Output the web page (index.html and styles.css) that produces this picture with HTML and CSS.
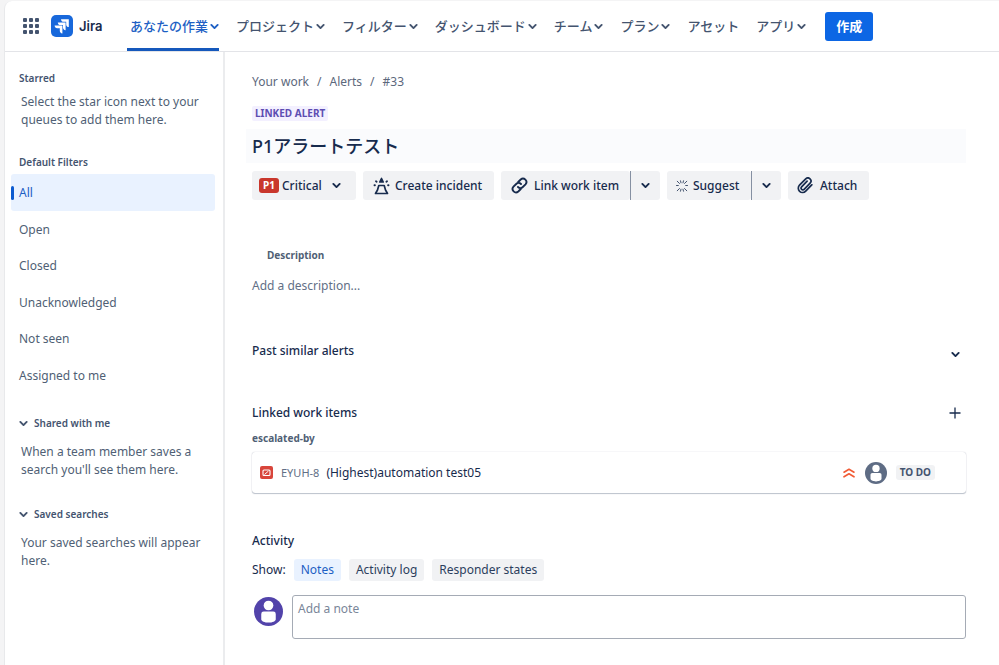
FILE: index.html
```html
<!DOCTYPE html>
<html lang="ja">
<head>
<meta charset="utf-8">
<meta name="viewport" content="width=device-width, initial-scale=1">
<title>Jira</title>
<link rel="stylesheet" href="styles.css">
</head>
<body>
<svg class="defs" width="0" height="0" aria-hidden="true">
  <symbol id="chevron" viewBox="0 0 8 8"><path d="M1.200 2.600 4 5.400l2.800-2.800" fill="none" stroke="currentColor" stroke-width="1.700" stroke-linecap="round" stroke-linejoin="round"/></symbol>
  <symbol id="person" viewBox="0 0 30 30"><circle cx="15" cy="15" r="15" fill="currentColor"/><circle cx="15" cy="8.800" r="5" fill="#fff"/><path d="M7.500 17.500a2.500 2.500 0 0 1 2.500-2.500h10a2.500 2.500 0 0 1 2.500 2.500v5.500c0 2-3.500 3.500-7.500 3.500s-7.500-1.500-7.500-3.500z" fill="#fff"/></symbol>
</svg>
<div class="app">
  <header class="topbar">
    <button class="switcher" type="button" aria-label="アプリの切り替え">
      <svg width="16" height="16" viewBox="0 0 16 16" fill="#44546f"><rect x="0" y="0" width="4" height="4" rx="1"/><rect x="6" y="0" width="4" height="4" rx="1"/><rect x="12" y="0" width="4" height="4" rx="1"/><rect x="0" y="6" width="4" height="4" rx="1"/><rect x="6" y="6" width="4" height="4" rx="1"/><rect x="12" y="6" width="4" height="4" rx="1"/><rect x="0" y="12" width="4" height="4" rx="1"/><rect x="6" y="12" width="4" height="4" rx="1"/><rect x="12" y="12" width="4" height="4" rx="1"/></svg>
    </button>
    <a class="brand" href="#">
      <svg width="22" height="22" viewBox="0 0 22 22"><rect width="22" height="22" rx="5" fill="#1868db"/><g fill="#fff"><path d="M10 4.200H17.800V12c-1.700 0-2.600-1.200-2.600-2.600V6.800H12.600c-1.400 0-2.600-.9-2.600-2.600z"/><path d="M6.800 7.400H14.600V15.200c-1.700 0-2.600-1.200-2.600-2.600V10H9.400c-1.400 0-2.600-.9-2.600-2.600z"/><path d="M3.600 10.600H11.400V18.400c-1.700 0-2.600-1.200-2.600-2.600V13.200H6.200c-1.400 0-2.600-.9-2.600-2.600z"/></g></svg>
      <span>Jira</span>
    </a>
    <nav class="nav">
      <a class="active" href="#">あなたの作業<svg class="chev"><use href="#chevron"/></svg></a>
      <a href="#">プロジェクト<svg class="chev"><use href="#chevron"/></svg></a>
      <a href="#">フィルター<svg class="chev"><use href="#chevron"/></svg></a>
      <a href="#">ダッシュボード<svg class="chev"><use href="#chevron"/></svg></a>
      <a href="#">チーム<svg class="chev"><use href="#chevron"/></svg></a>
      <a href="#">プラン<svg class="chev"><use href="#chevron"/></svg></a>
      <a href="#">アセット</a>
      <a href="#">アプリ<svg class="chev"><use href="#chevron"/></svg></a>
    </nav>
    <button class="create" type="button">作成</button>
  </header>
  <div class="body">
    <aside class="sidebar">
      <section>
        <h2>Starred</h2>
        <p>Select the star icon next to your queues to add them here.</p>
      </section>
      <section>
        <h2>Default Filters</h2>
        <ul class="filters">
          <li><a class="current" href="#">All</a></li>
          <li><a href="#">Open</a></li>
          <li><a href="#">Closed</a></li>
          <li><a href="#">Unacknowledged</a></li>
          <li><a href="#">Not seen</a></li>
          <li><a href="#">Assigned to me</a></li>
        </ul>
      </section>
      <section class="group">
        <h2><button type="button"><svg class="chev"><use href="#chevron"/></svg>Shared with me</button></h2>
        <p>When a team member saves a search you'll see them here.</p>
      </section>
      <section class="group">
        <h2><button type="button"><svg class="chev"><use href="#chevron"/></svg>Saved searches</button></h2>
        <p>Your saved searches will appear here.</p>
      </section>
    </aside>
    <main class="main">
      <nav class="crumbs"><a href="#">Your work</a><span>/</span><a href="#">Alerts</a><span>/</span><a href="#">#33</a></nav>
      <div><span class="tag">LINKED ALERT</span></div>
      <h1>P1アラートテスト</h1>
      <div class="actions">
        <button class="btn priority" type="button"><span class="p1">P1</span>Critical<svg class="chev"><use href="#chevron"/></svg></button>
        <button class="btn incident" type="button">
          <svg width="17" height="18" viewBox="0 0 17 18" fill="none" stroke="#172b4d" stroke-width="1.700" stroke-linejoin="round" stroke-linecap="round"><path d="M5.800 8.500h5.400l1.300 4.500 2 3.500H2.500l2-3.500z"/><path d="M8.500 1.500 6.800 5h3.400z" fill="#172b4d"/><path d="M3 4.300l.6.400M14 4.300l-.6.400M1.500 8.300h.4M15.100 8.300h.4" stroke-width="1.900"/></svg>Create incident</button>
        <div class="split">
          <button class="btn link" type="button"><svg width="17" height="17" viewBox="0 0 17 17" fill="none" stroke="#172b4d" stroke-width="1.900" stroke-linecap="round"><path d="M7.200 5 9.700 2.500a3.400 3.400 0 0 1 4.800 4.800L11.800 10a3.400 3.400 0 0 1-4.800 0"/><path d="M9.800 12 7.300 14.500a3.400 3.400 0 0 1-4.800-4.800L5.200 7A3.400 3.400 0 0 1 10 7"/></svg>Link work item</button>
          <button class="btn more" type="button" aria-label="More link options"><svg class="chev"><use href="#chevron"/></svg></button>
        </div>
        <div class="split">
          <button class="btn suggest" type="button"><svg width="12" height="12" viewBox="0 0 12 12" fill="none" stroke="#44546f" stroke-width="1" stroke-linecap="round"><path d="M4.500.8 5 2.800M7.500.8 7 2.800M1.200 1.200l2.300 2.300M10.800 1.200 8.500 3.500M.5 5.500h1.800M11.500 5.500H9.700M1.200 10.800l2.300-2.300M10.800 10.800 8.500 8.500M4.500 11.200 5 9.200M7.500 11.200 7 9.200"/></svg>Suggest</button>
          <button class="btn more" type="button" aria-label="More suggestions"><svg class="chev"><use href="#chevron"/></svg></button>
        </div>
        <button class="btn attach" type="button"><svg width="16" height="17" viewBox="0 0 16 17" fill="none" stroke="#172b4d" stroke-width="1.700" stroke-linecap="round"><path d="m14.500 8.200-5.800 6a4.300 4.300 0 0 1-6.200-6L8.700 1.900a3 3 0 0 1 4.400 4.200l-6 6.200a1.700 1.700 0 0 1-2.500-2.400l5.500-5.700M14.500 8.200l.3-.4"/></svg>Attach</button>
      </div>
      <section class="description">
        <h3>Description</h3>
        <p>Add a description...</p>
      </section>
      <section class="row similar">
        <h2>Past similar alerts</h2>
        <button class="icon" type="button" aria-label="Expand"><svg class="chev"><use href="#chevron"/></svg></button>
      </section>
      <section>
        <div class="row">
          <h2>Linked work items</h2>
          <button class="icon" type="button" aria-label="Add"><svg width="12" height="12" viewBox="0 0 12 12" stroke="#172b4d" stroke-width="1.300"><path d="M6 .5v11M.5 6h11"/></svg></button>
        </div>
        <h3 class="relation">escalated-by</h3>
        <div class="card">
          <svg width="13" height="13" viewBox="0 0 13 13"><rect width="13" height="13" rx="2" fill="#d8453b"/><rect x="3" y="4" width="7" height="5.500" rx="1" fill="none" stroke="#fff" stroke-width="1.100"/><path d="M4.500 8.500l4-3.500" stroke="#fff"/></svg>
          <a class="key" href="#">EYUH-8</a>
          <span class="summary">(Highest)automation test05</span>
          <svg width="12" height="10" viewBox="0 0 12 10" fill="none" stroke="#f15b35" stroke-width="1.600" stroke-linecap="round" stroke-linejoin="round"><path d="M1 4.200 6 1.200l5 3M1 8.800l5-3 5 3"/></svg>
          <svg class="assignee" width="22" height="22"><use href="#person"/></svg>
          <span class="status">TO DO</span>
        </div>
      </section>
      <section class="activity">
        <h2>Activity</h2>
        <div class="tabs">
          <span>Show:</span>
          <button class="selected" type="button">Notes</button>
          <button type="button">Activity log</button>
          <button type="button">Responder states</button>
        </div>
        <div class="note">
          <svg class="me" width="29" height="29"><use href="#person"/></svg>
          <textarea aria-label="Add a note" placeholder="Add a note"></textarea>
        </div>
      </section>
    </main>
  </div>
</div>
</body>
</html>
```
FILE: styles.css
```css
* { box-sizing: border-box; }
body {
  margin: 0;
  background: #f4f4f5;
  color: #172b4d;
  font: 12px/18px "Noto Sans", "Noto Sans CJK JP", sans-serif;
}
h1, h2, h3, p, ul { margin: 0; padding: 0; }
ul { list-style: none; }
a { color: inherit; text-decoration: none; }
button { margin: 0; padding: 0; border: 0; background: none; color: inherit; font: inherit; }
svg { flex: none; display: block; }
.defs { position: absolute; }
.chev { width: 9px; height: 9px; }

.app {
  display: flex;
  flex-direction: column;
  min-height: calc(100vh - 1px);
  margin: 1px 0 0 4px;
  background: #fff;
  border-left: 1px solid #e8e9eb;
  border-radius: 8px 0 0 0;
}

.topbar {
  display: flex;
  align-items: center;
  height: 51px;
  padding-left: 18px;
  border-bottom: 1px solid #e3e4e8;
}
.brand {
  display: flex;
  align-items: center;
  gap: 6px;
  width: 76px;
  margin-left: 12px;
  font: 600 13px/20px Inter, sans-serif;
}
.nav {
  display: flex;
  align-self: stretch;
  gap: 14px;
  color: #44546f;
  font-family: "Noto Sans CJK JP", sans-serif;
  font-size: 13px;
  font-weight: 500;
}
.nav a {
  display: flex;
  align-items: center;
  gap: 2px;
  padding: 3px 0 0 3px;
  border-bottom: 3px solid transparent;
  white-space: nowrap;
}
.nav .active { color: #1d5fc4; border-color: #1558bc; }
.create {
  width: 48px;
  height: 29px;
  margin-left: 19px;
  border-radius: 3px;
  background: #0c66e4;
  color: #fff;
  font-family: "Noto Sans CJK JP", sans-serif;
  font-size: 13px;
  font-weight: 700;
}

.body { display: flex; flex: 1; }
.sidebar {
  flex: none;
  width: 220px;
  padding: 17px 8px 0 6px;
  border-right: 2px solid #ebecee;
  color: #505f75;
}
.sidebar h2 {
  padding-left: 8px;
  color: #44546f;
  font-size: 10px;
  font-weight: 600;
}
.sidebar p { padding: 6px 0 24px 10px; }
.filters { display: grid; grid-auto-rows: 1fr; height: 219px; margin: 3px 0 21px; }
.filters a {
  display: flex;
  align-items: center;
  height: 100%;
  padding: 2px 0 0 8px;
  border-radius: 3px;
}
.filters .current { background: #e9f2ff; color: #1d5fc4; }
.filters .current::before {
  content: "";
  width: 3px;
  height: 14px;
  margin: 0 5px 0 -8px;
  border-radius: 2px;
  background: #0c5bd0;
}
.group button { display: flex; align-items: center; gap: 6px; font-weight: 600; }
.sidebar .group p { padding: 11px 0 26px 10px; }

.main { flex: 1; min-width: 0; padding: 21px 33px 26px 27px; }
.crumbs { display: flex; gap: 8px; color: #5c687c; }
.tag {
  display: inline-block;
  margin: 15px 0 8px;
  padding: 0 3px;
  border-radius: 2px;
  background: #f3f0ff;
  color: #5e4db2;
  font-size: 10px;
  font-weight: 700;
  line-height: 15px;
}
h1 {
  margin-left: -6px;
  padding: 5px 6px;
  background: #fafbfd;
  font-size: 18px;
  font-weight: 500;
  line-height: 24px;
}
.actions { display: flex; gap: 7px; margin-top: 8px; }
.btn {
  display: flex;
  align-items: center;
  height: 29px;
  border-radius: 3px;
  background: #f1f2f4;
  font-weight: 500;
  white-space: nowrap;
}
.priority { width: 104px; padding-left: 7px; }
.priority .chev { margin-left: 10px; }
.p1 {
  width: 20px;
  margin-right: 3px;
  border-radius: 3px;
  background: #c9372c;
  color: #fff;
  font-size: 10px;
  font-weight: 700;
  line-height: 15px;
}
.incident { width: 131px; padding-left: 10px; gap: 5px; }
.split { display: flex; }
.link { width: 129px; padding-left: 10px; gap: 6px; }
.suggest { width: 84px; padding-left: 9px; gap: 5px; }
.more { width: 30px; justify-content: center; border-left: 1px solid #8590a2; border-radius: 0 3px 3px 0; }
.attach { width: 81px; padding-left: 9px; gap: 7px; }

.description { margin-top: 46px; }
.description h3, .relation { color: #505f75; font-size: 10px; font-weight: 700; }
.description h3 { padding-left: 15px; }
.description p { margin-top: 13px; color: #626f86; }
.main h2 { font-size: 12px; font-weight: 500; }
.row { display: flex; align-items: center; justify-content: space-between; }
.similar { margin: 47px 0 44px; }
.icon { display: flex; justify-content: center; width: 22px; }
.similar .icon { padding-top: 6px; }
.relation { margin: 7px 0 5px; }
.card {
  display: flex;
  align-items: center;
  height: 41px;
  padding: 0 31px 0 8px;
  border-radius: 3px;
  box-shadow: 0 1px 1px #091e4240, 0 0 1px #091e424f;
}
.key { margin: 0 7px 0 8px; color: #626f86; font-size: 11px; }
.summary { flex: 1; }
.assignee { margin: 0 9px 0 10px; color: #5e6c84; }
.status {
  padding: 0 4px;
  border-radius: 3px;
  background: #f1f2f4;
  color: #44546f;
  font-size: 10px;
  font-weight: 700;
  line-height: 15px;
}
.activity { margin-top: 39px; }
.tabs { display: flex; align-items: center; gap: 8px; margin-top: 9px; }
.tabs button { height: 22px; padding: 0 7px; border-radius: 3px; background: #f1f2f4; color: #2c3e5d; }
.tabs .selected { background: #e9f2ff; color: #1d5fc4; }
.note { display: flex; gap: 9px; margin-top: 14px; padding-left: 2px; }
.me { margin-top: 2px; color: #5243aa; }
.note textarea {
  flex: 1;
  height: 44px;
  padding: 4px 5px;
  border: 1px solid #a5abb5;
  border-radius: 3px;
  background: #fff;
  color: inherit;
  font: inherit;
  resize: none;
}
.note textarea::placeholder { color: #7a8699; opacity: 1; }
```
